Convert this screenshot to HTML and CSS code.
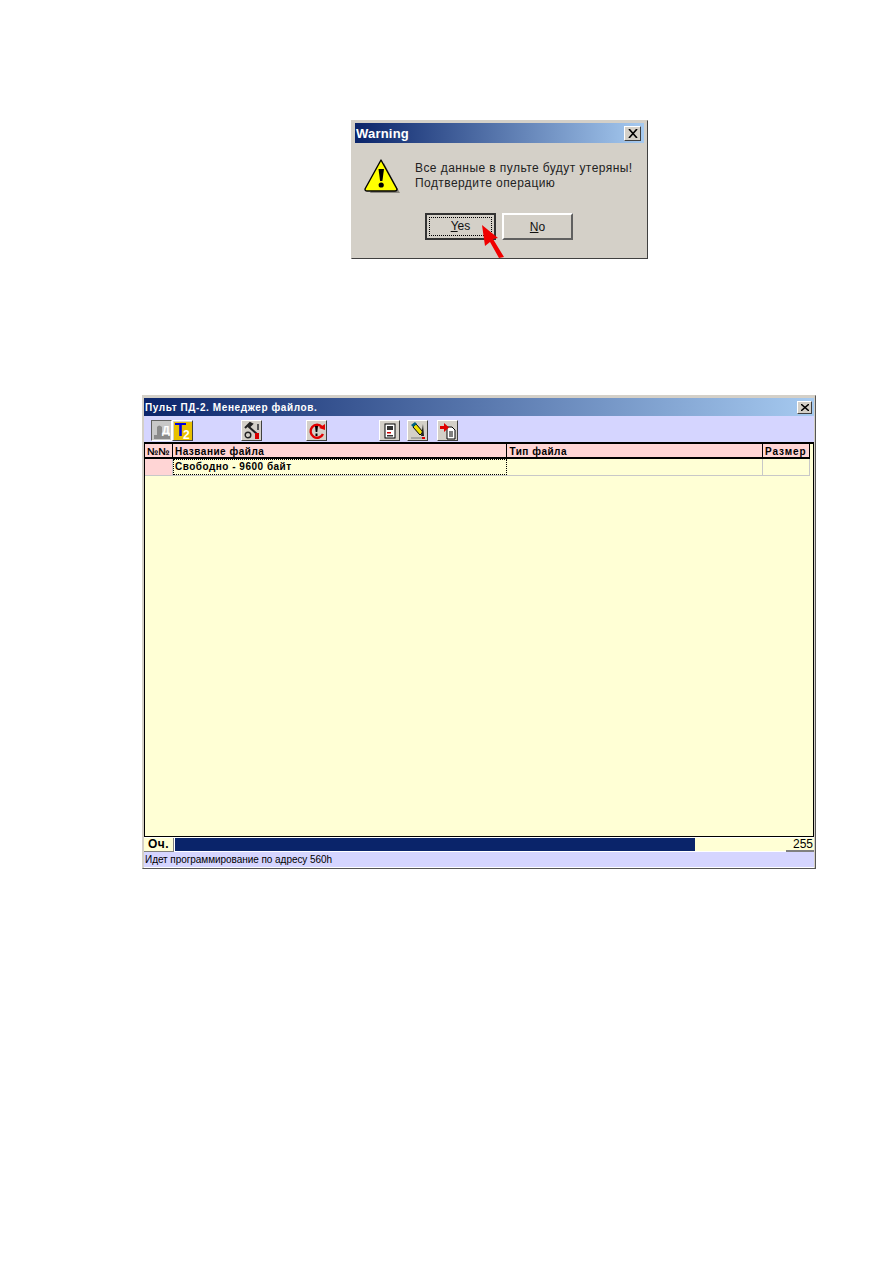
FILE: index.html
```html
<!DOCTYPE html>
<html lang="ru">
<head>
  <meta charset="UTF-8">
  <title>Менеджер файлов</title>
  <link rel="stylesheet" href="styles.css">
</head>
<body>
  <div class="dialog">
    <div class="titlebar dialog-title">
      <span>Warning</span>
      <button class="close close-big">
        <svg viewBox="0 0 10 9" width="10" height="9"><path d="M1 0 L9 9 M9 0 L1 9" stroke="#000" stroke-width="1.6"/></svg>
      </button>
    </div>
    <div class="dialog-body">
      <svg class="warn" viewBox="0 0 36 36" width="36" height="36">
        <path d="M20 5 L36 35 L6 35 Z" fill="#8a8780"/>
        <path d="M17 2 L33 31 Q33 33 31 33 L3 33 Q1 33 1 31 Z" fill="#ffff00" stroke="#000" stroke-width="1.4" stroke-linejoin="round"/>
        <path d="M14.500 11 L20 11 L18.400 23 L16.100 23 Z" fill="#000"/>
        <circle cx="17.200" cy="27" r="2.600" fill="#000"/>
      </svg>
      <div class="dialog-text">
        <div>Все данные в пульте будут утеряны!</div>
        <div>Подтвердите операцию</div>
      </div>
    </div>
    <div class="dialog-btns">
      <button class="btn btn-default"><span class="focus"><u>Y</u>es</span></button>
      <button class="btn"><u>N</u>o</button>
      <svg class="arrow" viewBox="0 0 30 42" width="30" height="42">
        <path d="M2 1 L18 14 L13 15 L24 33 L19 34 L10 18 L5 22 Z" fill="#f00000"/>
      </svg>
    </div>
  </div>

  <div class="window">
    <div class="titlebar window-title">
      <span>Пульт ПД-2. Менеджер файлов.</span>
      <button class="close">
        <svg viewBox="0 0 8 7" width="8" height="7"><path d="M0 0 L8 7 M8 0 L0 7" stroke="#000" stroke-width="1.4"/></svg>
      </button>
    </div>
    <div class="toolbar">
      <div class="tool pressed">
        <svg viewBox="0 0 20 20" width="20" height="20">
          <path d="M2 18 L2 14 L5 14 L5 6 Q7 3 10 6 L10 14 L18 14 L18 18 Z" fill="#8a8a8a"/>
          <text x="10" y="13" class="tool-letter">Д</text>
        </svg>
      </div>
      <div class="tool tool-t">
        <svg viewBox="0 0 20 20" width="20" height="20">
          <rect x="1" y="1" width="18" height="18" fill="#e8c000"/>
          <path d="M2 2 H13 V4 H8.800 V15 H6.200 V4 H2 Z" fill="#0000e0"/>
          <text x="10" y="18" class="tool-two">2</text>
        </svg>
      </div>
      <div class="tool gap-1">
        <svg viewBox="0 0 20 20" width="20" height="20">
          <path d="M3 7 L8 2 L10 3 L7 6 L15 13" fill="none" stroke="#222" stroke-width="2"/>
          <circle cx="6" cy="14" r="2.800" fill="none" stroke="#222" stroke-width="1.400"/>
          <path d="M13 12 H17 V18 H13 Z" fill="#d80000"/>
          <path d="M15 3 H17 V9 H15 Z" fill="#555"/>
        </svg>
      </div>
      <div class="tool gap-2">
        <svg viewBox="0 0 20 20" width="20" height="20">
          <path d="M15 6 A6.500 6.500 0 1 0 16 13" fill="none" stroke="#e00000" stroke-width="2.400"/>
          <path d="M12 7 L18 3 L18 9 Z" fill="#e00000"/>
          <path d="M8 5 H11 L10.300 11 H8.700 Z M8.500 12.500 H10.500 V15 H8.500 Z" fill="#000"/>
        </svg>
      </div>
      <div class="tool gap-3">
        <svg viewBox="0 0 20 20" width="20" height="20">
          <rect x="5" y="3" width="10" height="14" fill="#fff" stroke="#000"/>
          <rect x="7" y="5" width="6" height="4" fill="#333"/>
          <rect x="7" y="11" width="4" height="1.500" fill="#d00000"/>
          <rect x="7" y="14" width="6" height="1.500" fill="#333"/>
        </svg>
      </div>
      <div class="tool gap-4">
        <svg viewBox="0 0 20 20" width="20" height="20">
          <path d="M5 6 L8 3 L15 11 L12 14 Z" fill="#f0e000" stroke="#000"/>
          <path d="M3 4 L7 1 L9 3 L5 6 Z" fill="#006080"/>
          <path d="M15 3 L13 15 L16 15 Z" fill="#222"/>
          <path d="M3 17 H15" stroke="#999" stroke-width="1.500"/>
          <path d="M14 16 H17 V18 H14 Z" fill="#e00000"/>
        </svg>
      </div>
      <div class="tool gap-5">
        <svg viewBox="0 0 20 20" width="20" height="20">
          <path d="M9 6 H14 L17 9 V18 H9 Z" fill="#fff" stroke="#000"/>
          <path d="M11 11 H15 M11 13 H15 M11 15 H15" stroke="#000"/>
          <path d="M2 5 H6 V2 L11 6.500 L6 11 V8 H2 Z" fill="#e00000"/>
        </svg>
      </div>
    </div>
    <div class="files">
      <div class="row head">
        <div class="cell c-num">№№</div>
        <div class="cell c-name">Название файла</div>
        <div class="cell c-type">Тип файла</div>
        <div class="cell c-size">Размер</div>
      </div>
      <div class="row body-row">
        <div class="cell c-num num-empty"></div>
        <div class="cell c-name selected">Свободно - 9600 байт</div>
        <div class="cell c-type"></div>
        <div class="cell c-size"></div>
      </div>
    </div>
    <div class="queue">
      <div class="queue-label">Оч.</div>
      <div class="queue-track"><div class="queue-fill" style="width: 520px"></div></div>
      <div class="queue-count">255</div>
    </div>
    <div class="status">Идет программирование по адресу 560h</div>
  </div>
</body>
</html>
```

FILE: styles.css
```css
body {
  margin: 0;
  background: #fff;
  font-family: "Liberation Sans", Arial, sans-serif;
  color: #000;
}

button {
  font-family: inherit;
  padding: 0;
}

.titlebar {
  display: flex;
  justify-content: space-between;
  align-items: center;
  color: #fff;
  font-weight: bold;
  background: linear-gradient(to right, #0a246a, #a6caf0);
}

.close {
  display: flex;
  align-items: center;
  justify-content: center;
  background: #d4d0c8;
  border: 1px solid;
  border-color: #fff #404040 #404040 #fff;
}

.close-big {
  width: 17px;
  height: 15px;
}

/* warning dialog */
.dialog {
  box-sizing: border-box;
  width: 297px;
  height: 139px;
  margin: 120px 0 0 351px;
  padding: 2px 3px 0;
  background: #d4d0c8;
  border: 1px solid;
  border-color: #d4d0c8 #404040 #404040 #d4d0c8;
}

.dialog-title {
  height: 20px;
  padding: 0 3px 0 1px;
  font-size: 13px;
  letter-spacing: 0.2px;
}

.dialog-body {
  display: flex;
  padding: 18px 0 0 9px;
  height: 49px;
}

.warn {
  margin-top: -3px;
}

.dialog-text {
  margin-left: 15px;
  font-size: 12px;
  line-height: 15px;
  letter-spacing: 0.43px;
  color: #222;
}

.dialog-btns {
  position: relative;
  display: flex;
  gap: 6px;
  padding: 3px 0 0 70px;
}

.btn {
  box-sizing: border-box;
  width: 71px;
  height: 27px;
  font-size: 12px;
  background: #d4d0c8;
  border: 2px solid;
  border-color: #fff #606060 #606060 #fff;
  color: #111;
}

.btn-default {
  border: 2px solid #333;
  padding: 2px;
}

.focus {
  display: block;
  height: 100%;
  box-sizing: border-box;
  line-height: 17px;
  border: 1px dotted #000;
}

.arrow {
  position: absolute;
  left: 125px;
  top: 14px;
}

/* file manager window */
.window {
  box-sizing: border-box;
  width: 674px;
  height: 474px;
  margin: 136px 0 0 142px;
  padding: 2px 1px 0 1px;
  display: flex;
  flex-direction: column;
  background: #d4d0c8;
  border: 1px solid;
  border-color: #d4d0c8 #555 #555 #d4d0c8;
}

.window-title {
  flex: none;
  height: 18px;
  padding: 0 2px 0 1px;
  font-size: 10px;
  letter-spacing: 0.6px;
}

.window-title .close {
  width: 15px;
  height: 13px;
}

.toolbar {
  flex: none;
  display: flex;
  height: 26px;
  padding: 4px 0 0 7px;
  box-sizing: border-box;
  background: #d5d5ff;
}

.tool {
  box-sizing: border-box;
  width: 21px;
  height: 21px;
  background: #d4d0c8;
  border: 1px solid;
  border-color: #fff #404040 #404040 #fff;
  overflow: hidden;
}

.tool svg {
  display: block;
  margin: -0.5px;
}

.pressed {
  background: #c8c8c8;
  border-color: #606060 #fff #fff #606060;
}

.tool-letter {
  font-size: 11px;
  fill: #fff;
  font-weight: bold;
}

.tool-two {
  font-size: 12px;
  fill: #fff;
  font-weight: bold;
}

.gap-1 { margin-left: 48px; }
.gap-2 { margin-left: 44px; }
.gap-3 { margin-left: 52px; }
.gap-4 { margin-left: 7px; }
.gap-5 { margin-left: 9px; }

.files {
  flex: 1;
  border: 1px solid #000;
  border-top-width: 2px;
  background: #ffffd5;
}

.row {
  display: flex;
}

.head {
  box-sizing: border-box;
  height: 15px;
  background: #ffd5d5;
  border-bottom: 2px solid #000;
  margin-right: 3px;
}

.body-row {
  height: 17px;
  margin-right: 3px;
  border-bottom: 1px solid #c8c8c8;
  box-sizing: border-box;
}

.cell {
  box-sizing: border-box;
  padding-left: 2px;
  font-size: 10px;
  font-weight: bold;
  line-height: 14px;
  letter-spacing: 0.5px;
  white-space: nowrap;
  overflow: hidden;
}

.head .cell {
  border-right: 1px solid #000;
  line-height: 15px;
}

.body-row .cell {
  border-right: 1px solid #c8c8c8;
}

.c-num { width: 28px; letter-spacing: 0; }
.c-name { width: 335px; }
.c-type { width: 256px; }
.c-size { width: 47px; letter-spacing: 0.9px; }

.num-empty {
  background: #ffd5d5;
}

.selected {
  border: 1px dotted #000 !important;
  line-height: 14px;
  padding-left: 1px;
}

.queue {
  flex: none;
  display: flex;
  height: 15px;
  background: #fff;
  padding-top: 1px;
  box-sizing: border-box;
}

.queue-label {
  box-sizing: border-box;
  width: 30px;
  font-size: 12px;
  font-weight: bold;
  line-height: 13px;
  text-align: center;
  letter-spacing: 0.5px;
  background: #ffffd5;
  border-right: 1px solid #808080;
  border-bottom: 1px solid #808080;
}

.queue-track {
  flex: 1;
  margin-bottom: 1px;
  margin-left: 1px;
  background: #ffffd5;
}

.queue-fill {
  height: 100%;
  background: #0a246a;
}

.queue-count {
  box-sizing: border-box;
  width: 28px;
  font-size: 12px;
  line-height: 13px;
  text-align: right;
  padding-right: 1px;
  background: #ffffd5;
  border-bottom: 2px solid #808080;
}

.status {
  flex: none;
  height: 15px;
  padding-left: 1px;
  font-size: 10px;
  line-height: 15px;
  letter-spacing: -0.05px;
  background: #d5d5ff;
  border-bottom: 1px solid #fff;
}
```
